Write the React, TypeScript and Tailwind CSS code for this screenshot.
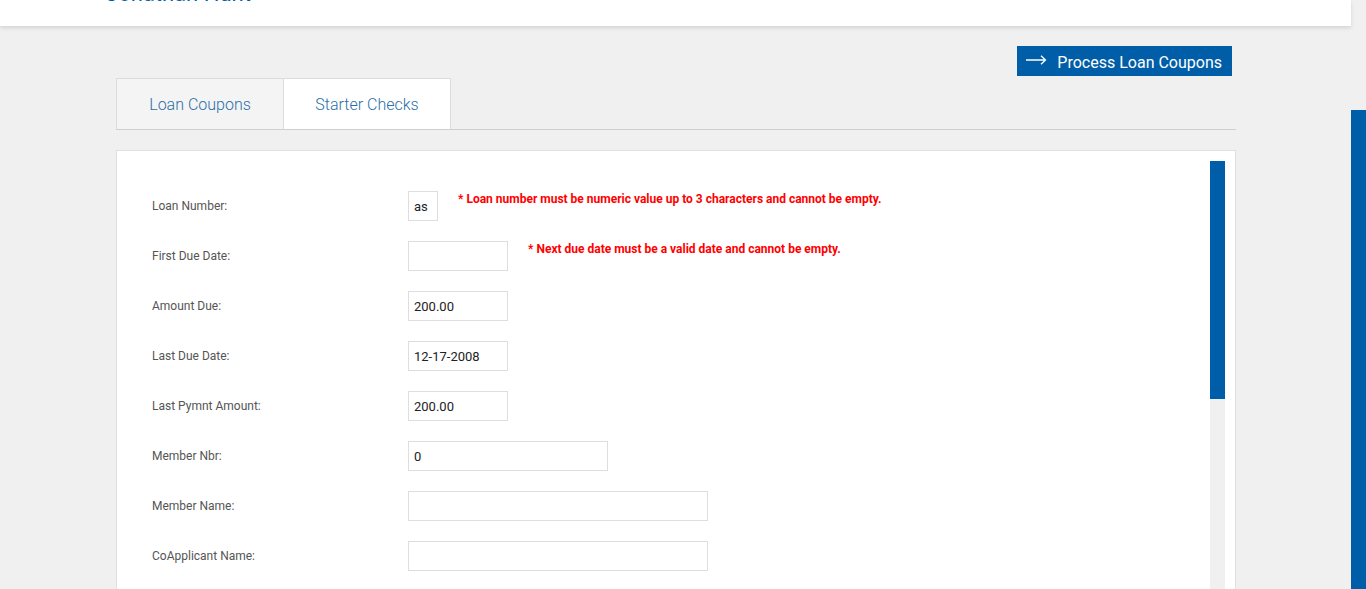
import { useState } from 'react'

interface Field {
  label: string
  value: string
  width: string
  error?: string
}

const fields: Field[] = [
  { label: 'Loan Number:', value: 'as', width: 'w-[30px]', error: '* Loan number must be numeric value up to 3 characters and cannot be empty.' },
  { label: 'First Due Date:', value: '', width: 'w-[100px]', error: '* Next due date must be a valid date and cannot be empty.' },
  { label: 'Amount Due:', value: '200.00', width: 'w-[100px]' },
  { label: 'Last Due Date:', value: '12-17-2008', width: 'w-[100px]' },
  { label: 'Last Pymnt Amount:', value: '200.00', width: 'w-[100px]' },
  { label: 'Member Nbr:', value: '0', width: 'w-[200px]' },
  { label: 'Member Name:', value: '', width: 'w-[300px]' },
  { label: 'CoApplicant Name:', value: '', width: 'w-[300px]' },
  { label: 'Address:', value: '', width: 'w-[300px]' },
]

export default function App() {
  const [tab, setTab] = useState('coupons')

  return (
    <div className="flex h-screen overflow-hidden bg-[#f0f0f0] font-['Roboto',sans-serif]">
      <div className="flex-1 min-w-0">
        {/* header */}
        <div className="h-[26px] bg-white shadow-[0_2px_4px_rgba(0,0,0,0.12)] overflow-hidden relative z-10">
          <div className="ml-[106px] -mt-[19px] text-[22px] leading-[26px] text-[#005ea8]">Jonathan Hunt</div>
        </div>

        <div className="ml-[116px] w-[1120px]">
          <div className="mt-[20px] flex justify-end pr-[4px]">
            <button className="h-[30px] bg-[#005ea8] text-white flex items-center pl-[9px] pr-[10px] gap-[10px] text-[16px]">
              <svg width="21" height="10" viewBox="0 0 21 10" fill="none" stroke="white" strokeWidth="1.3" className="-mt-[2px]">
                <path d="M0 5h19.5M15 0.8l4.5 4.2L15 9.2" />
              </svg>
              <span className="pt-[3px]">Process Loan Coupons</span>
            </button>
          </div>

          {/* tabs */}
          <div className="mt-[2px] flex border-b border-[#cfcfcf]">
            <button
              onClick={() => setTab('coupons')}
              className={`w-[168px] h-[51px] pt-[2px] border border-b-0 border-[#dcdcdc] text-[16px] font-light text-[#2a6fa8] ${tab === 'coupons' ? 'bg-[#f4f4f4]' : 'bg-white'}`}
            >
              Loan Coupons
            </button>
            <button
              onClick={() => setTab('checks')}
              className={`w-[167px] h-[51px] pt-[2px] border border-b-0 border-l-0 border-[#dcdcdc] text-[16px] font-light text-[#2a6fa8] ${tab === 'checks' ? 'bg-[#f4f4f4]' : 'bg-white'}`}
            >
              Starter Checks
            </button>
          </div>

          {/* form panel */}
          <div className="relative mt-[20px] h-[460px] bg-white border border-[#e0e0e0]">
            <div className="pt-[40px] pl-[35px] flex flex-col gap-[20px]">
              {fields.map(f => (
                <div key={f.label} className="flex items-start">
                  <div className="w-[256px] h-[30px] flex items-center text-[12px] text-[#555]">{f.label}</div>
                  <input
                    defaultValue={f.value}
                    className={`${f.width} h-[30px] border border-[#dedede] px-[5px] text-[13px] text-[#222] outline-none`}
                  />
                  {f.error && (
                    <div className="ml-[20px] mt-[1px] text-[12px] font-bold text-[#ff0000] leading-[14px]">{f.error}</div>
                  )}
                </div>
              ))}
            </div>
            {/* inner scrollbar */}
            <div className="absolute top-[10px] right-[10px] bottom-0 w-[15px] bg-[#f0f0f0]">
              <div className="h-[238px] bg-[#005ea8]" />
            </div>
          </div>
        </div>
      </div>

      {/* page scrollbar */}
      <div className="w-[15px] bg-[#f0f0f0] flex flex-col">
        <div className="h-[110px]" />
        <div className="flex-1 bg-[#005ea8]" />
      </div>
    </div>
  )
}
